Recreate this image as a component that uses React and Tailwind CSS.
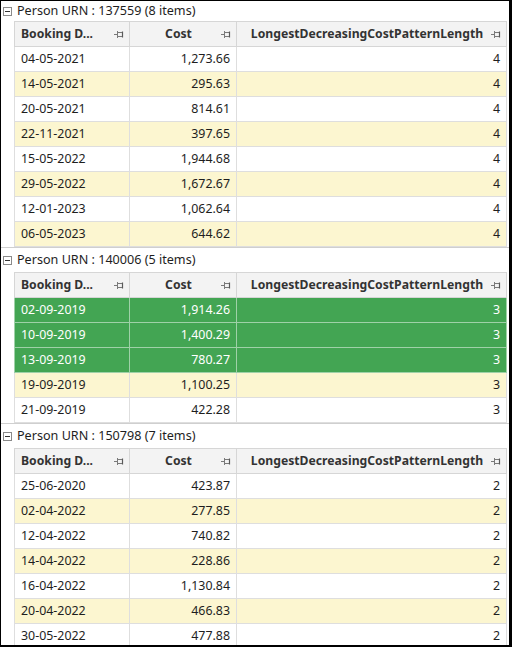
import React from "react";

const groups = [
  {
    urn: "137559",
    rows: [
      ["04-05-2021", "1,273.66", "4"],
      ["14-05-2021", "295.63", "4"],
      ["20-05-2021", "814.61", "4"],
      ["22-11-2021", "397.65", "4"],
      ["15-05-2022", "1,944.68", "4"],
      ["29-05-2022", "1,672.67", "4"],
      ["12-01-2023", "1,062.64", "4"],
      ["06-05-2023", "644.62", "4"],
    ],
  },
  {
    urn: "140006",
    selected: [0, 1, 2],
    rows: [
      ["02-09-2019", "1,914.26", "3"],
      ["10-09-2019", "1,400.29", "3"],
      ["13-09-2019", "780.27", "3"],
      ["19-09-2019", "1,100.25", "3"],
      ["21-09-2019", "422.28", "3"],
    ],
  },
  {
    urn: "150798",
    rows: [
      ["25-06-2020", "423.87", "2"],
      ["02-04-2022", "277.85", "2"],
      ["12-04-2022", "740.82", "2"],
      ["14-04-2022", "228.86", "2"],
      ["16-04-2022", "1,130.84", "2"],
      ["20-04-2022", "466.83", "2"],
      ["30-05-2022", "477.88", "2"],
    ],
  },
];

const PinIcon = () => (
  <svg width="10" height="9" viewBox="0 0 10 9" className="shrink-0">
    <path d="M0 4.5H3.5" stroke="#7a7a7a" strokeWidth="1" />
    <path d="M3.5 1V8" stroke="#7a7a7a" strokeWidth="1" />
    <path d="M3.5 2.5H8.5V6.5H3.5" stroke="#7a7a7a" strokeWidth="1" fill="none" />
    <path d="M8.5 1.5V7.5" stroke="#5a5a5a" strokeWidth="1.2" />
  </svg>
);

const HeaderRow = () => (
  <div className="flex h-[26px] ml-[13px] w-[493px] border-t border-b border-[#d6d6d6] bg-[#f3f3f3] text-[12.2px] font-bold text-[#333]">
    <div className="flex items-center w-[115px] border-l border-[#d6d6d6] pl-[6px] pr-[5px]">
      <span className="flex-1 whitespace-nowrap overflow-hidden">Booking D...</span>
      <PinIcon />
    </div>
    <div className="flex items-center w-[107px] border-l border-[#d6d6d6] pl-[6px] pr-[5px]">
      <span className="flex-1 text-center">Cost</span>
      <PinIcon />
    </div>
    <div className="flex items-center w-[271px] border-l border-r border-[#d6d6d6] pl-[6px] pr-[5px]">
      <span className="flex-1 text-center whitespace-nowrap">LongestDecreasingCostPatternLength</span>
      <PinIcon />
    </div>
  </div>
);

const DataRow = ({ row, index, selected }) => {
  const bg = selected ? "bg-[#43a553] text-white" : index % 2 === 1 ? "bg-[#fcf6d0] text-[#1e1e1e]" : "bg-white text-[#1e1e1e]";
  const line = selected ? "border-[#9fd1a8]" : "border-[#dedede]";
  return (
    <div className={`flex h-[25px] ml-[13px] w-[493px] border-b text-[12.4px] ${bg} ${line}`}>
      <div className={`flex items-center w-[115px] border-l pl-[6px] ${line}`}>{row[0]}</div>
      <div className={`flex items-center justify-end w-[107px] border-l pr-[6px] ${line}`}>{row[1]}</div>
      <div className={`flex items-center justify-end w-[271px] border-l border-r pr-[6px] ${line}`}>{row[2]}</div>
    </div>
  );
};

const Group = ({ group, first }) => (
  <div className={first ? "" : "border-t border-[#cfcfcf]"}>
    <div className={`flex items-center gap-[5px] pl-[2px] text-[12.6px] text-[#1e1e1e] ${first ? "h-[20px]" : "h-[24px]"}`}>
      <div className="w-[9px] h-[9px] border border-[#8a8a8a] bg-white flex items-center justify-center">
        <div className="w-[5px] h-px bg-[#333]" />
      </div>
      <span>Person URN : {group.urn} ({group.rows.length} items)</span>
    </div>
    <HeaderRow />
    {group.rows.map((row, i) => (
      <DataRow key={i} row={row} index={i} selected={group.selected?.includes(i)} />
    ))}
  </div>
);

export default function App() {
  return (
    <div
      className="w-[512px] h-[647px] overflow-hidden bg-white border-l border-t border-r-[3px] border-b-2 border-black"
      style={{ fontFamily: '"Noto Sans", "Open Sans", sans-serif' }}
    >
      {groups.map((g, i) => (
        <Group key={g.urn} group={g} first={i === 0} />
      ))}
    </div>
  );
}
